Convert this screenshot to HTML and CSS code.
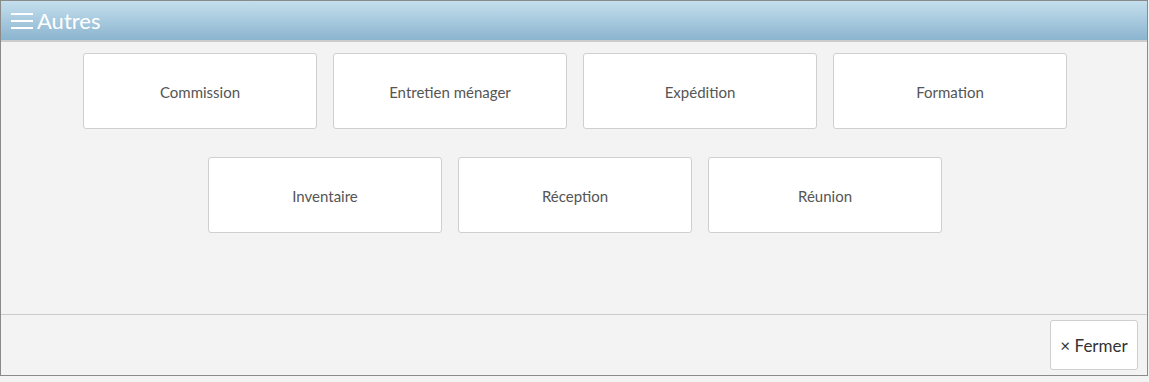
FILE: index.html
```html
<!DOCTYPE html>
<html lang="fr">
<head>
<meta charset="utf-8">
<title>Autres</title>
<link rel="stylesheet" href="styles.css">
</head>
<body>
<div class="dialog">
  <div class="header">
    <svg class="menu-icon" width="24" height="18" viewBox="0 0 24 18" aria-hidden="true">
      <path d="M1 2H23M1 9H23M1 16H23" stroke="#ffffff" stroke-width="2" fill="none"/>
    </svg>
    <span class="title">Autres</span>
  </div>
  <div class="body">
    <div class="choices">
      <button class="choice">Commission</button>
      <button class="choice">Entretien ménager</button>
      <button class="choice">Expédition</button>
      <button class="choice">Formation</button>
      <button class="choice">Inventaire</button>
      <button class="choice">Réception</button>
      <button class="choice">Réunion</button>
    </div>
  </div>
  <div class="footer">
    <button class="close"><span class="x">×</span> Fermer</button>
  </div>
</div>
</body>
</html>
```
FILE: styles.css
```css
html, body {
  margin: 0;
  padding: 0;
  background: #f3f3f3;
}
body {
  font-family: "Source Sans Pro", Lato, "Open Sans", "Liberation Sans", sans-serif;
}
.dialog {
  width: 1146px;
  height: 374px;
  border: 1px solid #8a8a8a;
  display: flex;
  flex-direction: column;
  background: #f3f3f3;
}
.header {
  height: 39px;
  background: linear-gradient(#c4dfed, #8bb4cf);
  border-bottom: 2px solid #cccccc;
  display: flex;
  align-items: center;
  padding-left: 9px;
  gap: 3px;
}
.menu-icon {
  display: block;
}
.title {
  color: #ffffff;
  font-size: 22px;
  line-height: 1;
  margin-top: 1px;
}
.body {
  flex: 1;
  padding-top: 11px;
  padding-left: 2px;
  border-bottom: 1px solid #cccccc;
}
.choices {
  width: 984px;
  margin: 0 auto;
  display: flex;
  flex-wrap: wrap;
  justify-content: center;
  gap: 28px 16px;
}
.choice {
  width: 234px;
  height: 76px;
  background: #ffffff;
  border: 1px solid #cfcfcf;
  border-radius: 3px;
  font-family: inherit;
  font-size: 15px;
  color: #555555;
  padding: 2px 0 0;
}
.footer {
  height: 60px;
  display: flex;
  justify-content: flex-end;
  align-items: center;
  padding-right: 9px;
}
.close {
  width: 88px;
  height: 50px;
  background: #ffffff;
  border: 1px solid #cfcfcf;
  border-radius: 3px;
  font-family: inherit;
  font-size: 17px;
  color: #333333;
  padding: 0;
}
.x {
  font-size: 17px;
}
```
